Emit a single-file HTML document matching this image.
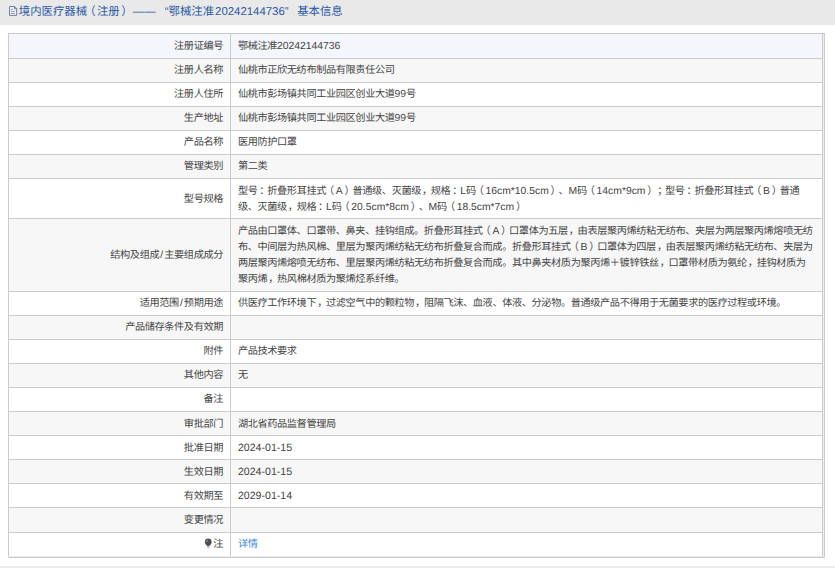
<!DOCTYPE html>
<html lang="zh-CN">
<head>
<meta charset="utf-8">
<title>境内医疗器械（注册）</title>
<style>
html,body{margin:0;padding:0;background:#fff;}
body{width:835px;height:568px;position:relative;overflow:hidden;font-family:"Liberation Sans",sans-serif;color:#444;text-rendering:geometricPrecision;text-spacing-trim:space-all;}
.hd{position:absolute;left:0;top:0;width:835px;height:25px;background:#e9e9e9;}
.t{position:absolute;left:18.8px;top:1.3px;height:22px;line-height:22px;font-size:11.4px;color:#2a59a5;white-space:nowrap;}
.t i{font-style:normal;margin-left:1px;}
.t b{font-weight:normal;position:relative;left:-1.6px;}
.t u{text-decoration:none;margin-left:6px;}
.t s{text-decoration:none;margin-left:5.4px;}
.ic{position:absolute;left:9px;top:6px;}
.r{position:absolute;left:8px;width:815px;background:#fff;}
.r.g{background:#f7f7f7;}
.r.h{background:#f4f6fb;}
.b{position:absolute;left:0;top:0;width:815px;height:1px;background:#cbcbcb;}
.l,.v{position:absolute;font-size:10.2px;letter-spacing:-0.4px;line-height:16px;white-space:nowrap;}
.l{right:600px;text-align:right;}
.v{left:229.9px;}
.v div{height:16px;}
.v i,.l i{font-style:normal;font-size:10.35px;letter-spacing:0;}
.v i.d{font-size:10.6px;position:relative;top:-1px;}
.sl{margin:0 1.1px;}
.v b{font-weight:normal;position:relative;}
.po{left:-2px;}
.pc{left:1.8px;}
.pm{left:1.9px;}
.pk{left:1px;}
.vl{position:absolute;top:33px;width:1px;background:#cbcbcb;}
.ft{position:absolute;left:0;top:566px;width:835px;height:2px;background:#ebebeb;}
a{color:#3689ee;text-decoration:none;}
.bulb{position:absolute;left:196px;top:6px;overflow:visible;}
</style>
</head>
<body>
<div class="hd">
<svg class="ic" width="9" height="10" viewBox="0 0 9 10"><path d="M0.5 0.5H5.6L7.7 2.6V9.4H0.5Z" fill="#eff1fb" stroke="#6272a2" stroke-width="0.9"/><path d="M5.4 0.6V2.8H7.6" fill="none" stroke="#45609c" stroke-width="0.8"/><path d="M1.9 3.4H3.8M1.9 5.45H5.9M1.9 7.5H5.9" stroke="#83879f" stroke-width="0.8"/></svg>
<div class="t">境内医疗器械<b style="left:-3px">（</b><b>注册</b>）—— <u>“</u>鄂械注准<i>20242144736</i>” <s>基本信息</s></div>
</div>
<div class="r h" style="top:33px;height:25px"><div class="b"></div><div class="l" style="top:6px">注册证编号</div><div class="v" style="top:6px"><div>鄂械注准<i>20242144736</i></div></div></div>
<div class="r g" style="top:58px;height:24px"><div class="b"></div><div class="l" style="top:5px">注册人名称</div><div class="v" style="top:5px"><div>仙桃市正欣无纺布制品有限责任公司</div></div></div>
<div class="r" style="top:82px;height:24px"><div class="b"></div><div class="l" style="top:5px">注册人住所</div><div class="v" style="top:5px"><div>仙桃市彭场镇共同工业园区创业大道<i>99</i>号</div></div></div>
<div class="r g" style="top:106px;height:24px"><div class="b"></div><div class="l" style="top:5px">生产地址</div><div class="v" style="top:5px"><div>仙桃市彭场镇共同工业园区创业大道<i>99</i>号</div></div></div>
<div class="r" style="top:130px;height:24px"><div class="b"></div><div class="l" style="top:5px">产品名称</div><div class="v" style="top:5px"><div>医用防护口罩</div></div></div>
<div class="r g" style="top:154px;height:24px"><div class="b"></div><div class="l" style="top:5px">管理类别</div><div class="v" style="top:5px"><div>第二类</div></div></div>
<div class="r" style="top:178px;height:40px"><div class="b"></div><div class="l" style="top:14px">型号规格</div><div class="v" style="top:6px"><div>型号<b class="pm">：</b>折叠形耳挂式<b class="po">（</b><i>A</i><b class="pc">）</b>普通级、灭菌级<b class="pk">，</b>规格<b class="pm">：</b><i>L</i>码<b class="po">（</b><i>16cm*10.5cm</i><b class="pc">）</b>、<i>M</i>码<b class="po">（</b><i>14cm*9cm</i><b class="pc">）</b><b class="pm">；</b>型号<b class="pm">：</b>折叠形耳挂式<b class="po">（</b><i>B</i><b class="pc">）</b>普通</div><div>级、灭菌级<b class="pk">，</b>规格<b class="pm">：</b><i>L</i>码<b class="po">（</b><i>20.5cm*8cm</i><b class="pc">）</b>、<i>M</i>码<b class="po">（</b><i>18.5cm*7cm</i><b class="pc">）</b></div></div></div>
<div class="r g" style="top:218px;height:73px"><div class="b"></div><div class="l" style="top:30px">结构及组成<i class="sl">/</i>主要组成成分</div><div class="v" style="top:6px"><div>产品由口罩体、口罩带、鼻夹、挂钩组成。折叠形耳挂式<b class="po">（</b><i>A</i><b class="pc">）</b>口罩体为五层<b class="pk">，</b>由表层聚丙烯纺粘无纺布、夹层为两层聚丙烯熔喷无纺</div><div>布、中间层为热风棉、里层为聚丙烯纺粘无纺布折叠复合而成。折叠形耳挂式<b class="po">（</b><i>B</i><b class="pc">）</b>口罩体为四层<b class="pk">，</b>由表层聚丙烯纺粘无纺布、夹层为</div><div>两层聚丙烯熔喷无纺布、里层聚丙烯纺粘无纺布折叠复合而成。其中鼻夹材质为聚丙烯＋镀锌铁丝<b class="pk">，</b>口罩带材质为氨纶<b class="pk">，</b>挂钩材质为</div><div>聚丙烯<b class="pk">，</b>热风棉材质为聚烯烃系纤维。</div></div></div>
<div class="r" style="top:291px;height:24px"><div class="b"></div><div class="l" style="top:5px">适用范围<i class="sl">/</i>预期用途</div><div class="v" style="top:5px"><div>供医疗工作环境下<b class="pk">，</b>过滤空气中的颗粒物<b class="pk">，</b>阻隔飞沫、血液、体液、分泌物。普通级产品不得用于无菌要求的医疗过程或环境。</div></div></div>
<div class="r g" style="top:315px;height:24px"><div class="b"></div><div class="l" style="top:5px">产品储存条件及有效期</div><div class="v" style="top:5px"></div></div>
<div class="r" style="top:339px;height:24px"><div class="b"></div><div class="l" style="top:5px">附件</div><div class="v" style="top:5px"><div>产品技术要求</div></div></div>
<div class="r g" style="top:363px;height:24px"><div class="b"></div><div class="l" style="top:5px">其他内容</div><div class="v" style="top:5px"><div>无</div></div></div>
<div class="r" style="top:387px;height:24px"><div class="b"></div><div class="l" style="top:5px">备注</div><div class="v" style="top:5px"></div></div>
<div class="r g" style="top:411px;height:24px"><div class="b"></div><div class="l" style="top:6px">审批部门</div><div class="v" style="top:6px"><div>湖北省药品监督管理局</div></div></div>
<div class="r" style="top:435px;height:24px"><div class="b"></div><div class="l" style="top:6px">批准日期</div><div class="v" style="top:6px"><div><i class="d">2024-01-15</i></div></div></div>
<div class="r g" style="top:459px;height:24px"><div class="b"></div><div class="l" style="top:6px">生效日期</div><div class="v" style="top:6px"><div><i class="d">2024-01-15</i></div></div></div>
<div class="r" style="top:483px;height:24px"><div class="b"></div><div class="l" style="top:6px">有效期至</div><div class="v" style="top:6px"><div><i class="d">2029-01-14</i></div></div></div>
<div class="r g" style="top:507px;height:25px"><div class="b"></div><div class="l" style="top:6px">变更情况</div><div class="v" style="top:6px"></div></div>
<div class="r" style="top:532px;height:25px"><div class="b"></div><svg class="bulb" width="8" height="10" viewBox="-0.7 -0.55 8 10"><circle cx="3.55" cy="3.4" r="3.35" fill="#504d4d"/><path d="M1.3 5.5H5.8L4.6 7.8H2.5Z" fill="#545151"/><path d="M2.6 8.7H4.5" stroke="#6a6a6a" stroke-width="0.7"/><path d="M1.9 3.6A1.9 1.9 0 0 1 3.5 1.6" fill="none" stroke="#a9a9a9" stroke-width="0.8"/></svg><div class="l" style="top:5px">注</div><div class="v" style="top:5px"><div><a>详情</a></div></div></div>
<div class="vl" style="left:8px;height:525px"></div>
<div class="vl" style="left:230px;height:523px"></div>
<div class="vl" style="left:822px;height:523px"></div>
<div class="vl" style="left:823px;height:524px;background:#eeeef2;top:34px"></div>
<div class="vl" style="left:824px;height:525px"></div>
<div class="b" style="left:8px;top:33px;width:817px;background:#c9c9c9"></div>
<div class="b" style="left:8px;top:556px;width:817px;background:#ebebeb"></div>
<div class="b" style="left:8px;top:557px;width:817px;background:#c9c9c9"></div>
<div class="ft"></div>
</body>
</html>
